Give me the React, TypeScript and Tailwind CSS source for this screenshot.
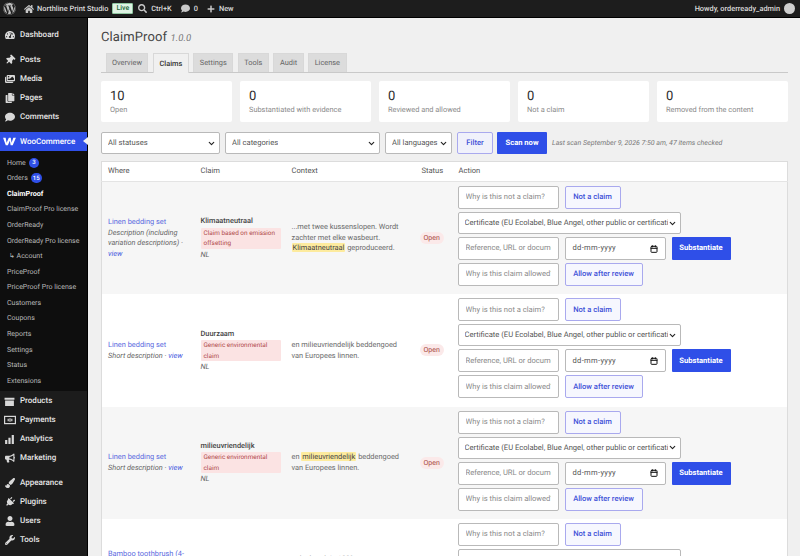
import { FaWordpress, FaHome, FaSearch, FaComment, FaPlus, FaTachometerAlt, FaThumbtack, FaImages, FaCopy, FaUser, FaWrench, FaPlug, FaPaintBrush, FaBullhorn } from "react-icons/fa";
import { ChevronDown, Calendar } from "lucide-react";
import type { ReactNode } from "react";

const font = "font-['Roboto','Noto_Sans',sans-serif] [text-rendering:geometricPrecision]";

function WooIcon() {
  return (
    <svg viewBox="0 0 20 14" className="h-[9px] w-[13px] fill-white">
      <path d="M0 1h4l1.5 8L9 1h3l1.2 8L16 1h4l-5 12h-3.2L10.5 6 7.5 13H4.2z" />
    </svg>
  );
}

function BoxIcon() {
  return (
    <svg viewBox="0 0 20 20" className="h-[11px] w-[11px] fill-[#d8d8d8]">
      <path d="M1 3h18v4H1zM2 8h16v10H2z" />
    </svg>
  );
}

function CardIcon() {
  return (
    <svg viewBox="0 0 20 20" className="h-[12px] w-[12px] fill-none stroke-[#d8d8d8] stroke-2">
      <rect x="1" y="4" width="18" height="12" />
      <path d="M10 7v6M7 8v4M13 8v4" />
    </svg>
  );
}

function BarsIcon() {
  return (
    <svg viewBox="0 0 20 20" className="h-[11px] w-[11px] fill-[#d8d8d8]">
      <path d="M2 11h4v7H2zM8 7h4v11H8zM14 2h4v16h-4z" />
    </svg>
  );
}

function MainItem({ icon, label }: { icon: ReactNode; label: string }) {
  return (
    <div className="flex h-[19px] items-center gap-[4px] pl-[3px] text-[8px] font-medium text-[#e6e6e6]">
      <span className="flex w-[13px] justify-center text-[10px] text-[#d8d8d8]">{icon}</span>
      {label}
    </div>
  );
}

function SubItem({ children, active = false }: { children: ReactNode; active?: boolean }) {
  return (
    <div className={`flex h-[15.6px] items-center gap-[3px] pl-[7px] whitespace-nowrap ${active ? "text-[7.2px] font-bold text-white" : "text-[7px] text-[#b9b9b9]"}`}>
      {children}
    </div>
  );
}

function Count({ n }: { n: number }) {
  return <span className="flex h-[10px] min-w-[10px] items-center justify-center rounded-full bg-[#2f4fe8] px-[2px] text-[6px] font-medium text-white">{n}</span>;
}

function Sidebar() {
  return (
    <aside className="w-[88px] shrink-0 border-r border-black bg-[#1c1c1c]">
      <div className="pt-[7px] pb-[6px]">
        <MainItem icon={<FaTachometerAlt />} label="Dashboard" />
      </div>
      <div className="pb-[6px]">
        <MainItem icon={<FaThumbtack className="rotate-45" />} label="Posts" />
        <MainItem icon={<FaImages />} label="Media" />
        <MainItem icon={<FaCopy />} label="Pages" />
        <MainItem icon={<FaComment />} label="Comments" />
      </div>
      <div className="relative flex h-[19px] items-center gap-[4px] bg-[#2f4fe8] pl-[3px] text-[8px] font-medium text-white">
        <WooIcon />
        WooCommerce
        <span className="absolute -right-px top-[5px] h-0 w-0 border-y-[4.5px] border-r-[5px] border-y-transparent border-r-[#f0f0f0]" />
      </div>
      <div className="bg-[#0e0e0e] pt-[4px] pb-[2px]">
        <SubItem>Home <Count n={3} /></SubItem>
        <SubItem>Orders <Count n={15} /></SubItem>
        <SubItem active>ClaimProof</SubItem>
        <SubItem>ClaimProof Pro license</SubItem>
        <SubItem>OrderReady</SubItem>
        <SubItem>OrderReady Pro license</SubItem>
        <SubItem><span className="pl-[2px]">↳ Account</span></SubItem>
        <SubItem>PriceProof</SubItem>
        <SubItem>PriceProof Pro license</SubItem>
        <SubItem>Customers</SubItem>
        <SubItem>Coupons</SubItem>
        <SubItem>Reports</SubItem>
        <SubItem>Settings</SubItem>
        <SubItem>Status</SubItem>
        <SubItem>Extensions</SubItem>
      </div>
      <div className="pt-[1px] pb-[6px]">
        <MainItem icon={<BoxIcon />} label="Products" />
        <MainItem icon={<CardIcon />} label="Payments" />
        <MainItem icon={<BarsIcon />} label="Analytics" />
        <MainItem icon={<FaBullhorn />} label="Marketing" />
      </div>
      <MainItem icon={<FaPaintBrush />} label="Appearance" />
      <MainItem icon={<FaPlug className="rotate-45" />} label="Plugins" />
      <MainItem icon={<FaUser />} label="Users" />
      <MainItem icon={<FaWrench />} label="Tools" />
    </aside>
  );
}

function AdminBar() {
  return (
    <header className="flex h-[18px] shrink-0 items-center justify-between border-b border-black bg-[#1d1d1d] pr-[5px] pl-[3px] text-[7.4px] font-medium text-[#dcdcdc]">
      <div className="flex items-center">
        <FaWordpress className="text-[13px] text-[#bdbdbd]" />
        <FaHome className="ml-[8px] text-[10px] text-[#c8c8c8]" />
        <span className="ml-[3px]">Northline Print Studio</span>
        <span className="ml-[4px] rounded-[1px] border border-[#8fc7a0] bg-[#dff3e4] px-[3px] text-[7px] leading-[9px] text-[#1f6b3a]">Live</span>
        <FaSearch className="ml-[5px] text-[9px] text-[#c8c8c8]" />
        <span className="ml-[4px]">Ctrl+K</span>
        <FaComment className="ml-[9px] text-[9px] text-[#c8c8c8]" />
        <span className="ml-[4px]">0</span>
        <FaPlus className="ml-[9px] text-[8px] text-[#c8c8c8]" />
        <span className="ml-[4px]">New</span>
      </div>
      <div className="flex items-center gap-[4px]">
        <span>Howdy, orderready_admin</span>
        <span className="h-[11px] w-[11px] rounded-full bg-[#cfcfcf]" />
      </div>
    </header>
  );
}

function Tabs() {
  const tabs = ["Overview", "Claims", "Settings", "Tools", "Audit", "License"];
  return (
    <div className="mt-[4px] flex h-[20px] items-end gap-[4.5px] border-b border-[#c9c9c9] pl-[4.5px]">
      {tabs.map((t) => (
        <div
          key={t}
          className={`flex items-center border border-b-0 border-[#d8d8d8] px-[5.5px] text-[7.4px] ${t === "Claims" ? "relative top-[1px] h-[20px] bg-[#f0f0f0] font-medium text-[#333]" : "h-[19px] bg-[#dcdcdc] text-[#666]"}`}
        >
          {t}
        </div>
      ))}
    </div>
  );
}

function Stat({ n, label }: { n: number; label: string }) {
  return (
    <div className="h-[41px] rounded-[2px] bg-white pt-[9px] pl-[9px]">
      <div className="text-[13px] leading-[14px] text-[#2c2c2c]">{n}</div>
      <div className="mt-[1px] text-[7.4px] leading-[10px] text-[#8a8a8a]">{label}</div>
    </div>
  );
}

function Select({ label, className }: { label: string; className: string }) {
  return (
    <div className={`flex h-[22px] items-center justify-between rounded-[2px] border border-[#b9b9b9] bg-white pr-[3px] pl-[6px] text-[7.6px] text-[#555] ${className}`}>
      <span className="overflow-hidden whitespace-nowrap">{label}</span>
      <ChevronDown className="h-[9px] w-[9px] shrink-0 text-[#222]" strokeWidth={3} />
    </div>
  );
}

function Field({ placeholder }: { placeholder: string }) {
  return (
    <div className="flex h-[23px] w-[101px] items-center rounded-[2px] border border-[#b9b9b9] bg-white px-[7px] text-[7.6px] text-[#8a8a8a]">
      <span className="overflow-hidden whitespace-nowrap">{placeholder}</span>
    </div>
  );
}

function Outline({ label, className }: { label: string; className: string }) {
  return (
    <div className={`flex h-[23px] items-center justify-center rounded-[2px] border border-[#a9a9ee] bg-[#f6f7fe] text-[7.6px] font-medium text-[#3f51d8] ${className}`}>
      {label}
    </div>
  );
}

function Actions() {
  return (
    <div className="flex flex-col gap-[3px]">
      <div className="flex gap-[6px]">
        <Field placeholder="Why is this not a claim?" />
        <Outline label="Not a claim" className="w-[56px]" />
      </div>
      <Select label="Certificate (EU Ecolabel, Blue Angel, other public or certification)" className="w-[223px]" />
      <div className="flex gap-[6px]">
        <Field placeholder="Reference, URL or document" />
        <div className="flex h-[23px] w-[101px] items-center justify-between rounded-[2px] border border-[#b9b9b9] bg-white px-[7px] text-[7.6px] tracking-[0.3px] text-[#555]">
          dd-mm-yyyy
          <Calendar className="h-[8px] w-[8px] text-[#111]" strokeWidth={3} />
        </div>
        <div className="flex h-[23px] w-[59px] items-center justify-center rounded-[1px] bg-[#2f4fe8] text-[7.6px] font-bold text-white">Substantiate</div>
      </div>
      <div className="flex gap-[6px]">
        <Field placeholder="Why is this claim allowed?" />
        <Outline label="Allow after review" className="w-[78px]" />
      </div>
    </div>
  );
}

function Mark({ children }: { children: ReactNode }) {
  return <mark className="rounded-[1px] bg-[#fdeb9e] px-[1px] text-[#444]">{children}</mark>;
}

type Row = {
  where: string;
  desc: ReactNode;
  claim: string;
  reason: string;
  context: ReactNode;
  alt: boolean;
};

const rows: Row[] = [
  {
    where: "Linen bedding set",
    desc: <>Description (including variation descriptions) · <a className="text-[#4a5ce0]">view</a></>,
    claim: "Klimaatneutraal",
    reason: "Claim based on emission offsetting",
    context: <>...met twee kussenslopen. Wordt zachter met elke wasbeurt. <Mark>Klimaatneutraal</Mark> geproduceerd.</>,
    alt: true,
  },
  {
    where: "Linen bedding set",
    desc: <>Short description · <a className="text-[#4a5ce0]">view</a></>,
    claim: "Duurzaam",
    reason: "Generic environmental claim",
    context: <>en milieuvriendelijk beddengoed van Europees linnen.</>,
    alt: false,
  },
  {
    where: "Linen bedding set",
    desc: <>Short description · <a className="text-[#4a5ce0]">view</a></>,
    claim: "milieuvriendelijk",
    reason: "Generic environmental claim",
    context: <>en <Mark>milieuvriendelijk</Mark> beddengoed van Europees linnen.</>,
    alt: true,
  },
  {
    where: "Bamboo toothbrush (4-pack)",
    desc: <>Description (including variation descriptions) · <a className="text-[#4a5ce0]">view</a></>,
    claim: "Biologisch",
    reason: "Generic claim",
    context: <>...the brush is 100% composteerbaar en volledig biologisch afbreekbaar, van de steel tot de verpakking.</>,
    alt: false,
  },
];

function ClaimsTable() {
  return (
    <table className="mt-[7px] w-full table-fixed border-collapse border border-[#dcdcdc] bg-white text-[7.4px] leading-[10.5px] text-[#6b6b6b]">
      <colgroup>
        <col className="w-[93px]" />
        <col className="w-[91px]" />
        <col className="w-[130px]" />
        <col className="w-[37px]" />
        <col />
      </colgroup>
      <thead>
        <tr className="h-[20px] border-b border-[#e4e4e4] text-left text-[7.6px] text-[#555]">
          <th className="pl-[6px] font-normal">Where</th>
          <th className="pl-[6px] font-normal">Claim</th>
          <th className="pl-[6px] font-normal">Context</th>
          <th className="pl-[6px] font-normal">Status</th>
          <th className="pl-[6px] font-normal">Action</th>
        </tr>
      </thead>
      <tbody>
        {rows.map((r, i) => (
          <tr key={i} className={r.alt ? "bg-[#f6f6f6]" : "bg-white"}>
            <td className="py-0 pr-[4px] pl-[6px] align-middle">
              <a className="text-[#5a6ae0]">{r.where}</a>
              <div className="italic text-[#666]">{r.desc}</div>
            </td>
            <td className="py-0 pr-[5px] pl-[6px] align-middle">
              <div className="font-medium text-[#444]">{r.claim}</div>
              <div className="mt-[1px] rounded-[1px] bg-[#fbe3e3] px-[3px] text-[6.4px] leading-[10.5px] text-[#b04a4a]">{r.reason}</div>
              <div className="mt-[1px] italic text-[#666]">NL</div>
            </td>
            <td className="py-0 pr-[12px] pl-[6px] align-middle">{r.context}</td>
            <td className="py-0 pl-[4px] align-middle">
              <span className="rounded-full bg-[#fbe9e9] px-[4px] py-[2px] text-[7px] text-[#a8483f]">Open</span>
            </td>
            <td className="pt-[4px] pb-[8.4px] pl-[5px] align-top">
              <Actions />
            </td>
          </tr>
        ))}
      </tbody>
    </table>
  );
}

export default function App() {
  return (
    <div className={`flex h-[556px] w-[800px] flex-col overflow-hidden bg-[#f0f0f0] ${font}`}>
      <AdminBar />
      <div className="flex min-h-0 flex-1">
        <Sidebar />
        <main className="min-w-0 flex-1 pt-[10px] pr-[12px] pl-[13px]">
          <h1 className="text-[13px] leading-[20px] tracking-[0.1px] text-[#444]">
            ClaimProof <span className="text-[9.5px] text-[#777] italic">1.0.0</span>
          </h1>
          <Tabs />
          <div className="mt-[8px] grid grid-cols-5 gap-[8px]">
            <Stat n={10} label="Open" />
            <Stat n={0} label="Substantiated with evidence" />
            <Stat n={0} label="Reviewed and allowed" />
            <Stat n={0} label="Not a claim" />
            <Stat n={0} label="Removed from the content" />
          </div>
          <div className="mt-[10px] flex items-center gap-[5px]">
            <Select label="All statuses" className="w-[119px]" />
            <Select label="All categories" className="w-[155px]" />
            <Select label="All languages" className="w-[67px]" />
            <div className="flex h-[22px] w-[36px] items-center justify-center rounded-[2px] border border-[#a9a9ee] bg-[#f0f1fb] text-[7.6px] font-medium text-[#3f51d8]">Filter</div>
            <div className="-ml-[1px] flex h-[22px] w-[50px] items-center justify-center rounded-[1px] bg-[#2f4fe8] text-[7.6px] font-bold text-white">Scan now</div>
            <span className="text-[7px] whitespace-nowrap text-[#777] italic">Last scan September 9, 2026 7:50 am, 47 items checked</span>
          </div>
          <ClaimsTable />
        </main>
      </div>
    </div>
  );
}
